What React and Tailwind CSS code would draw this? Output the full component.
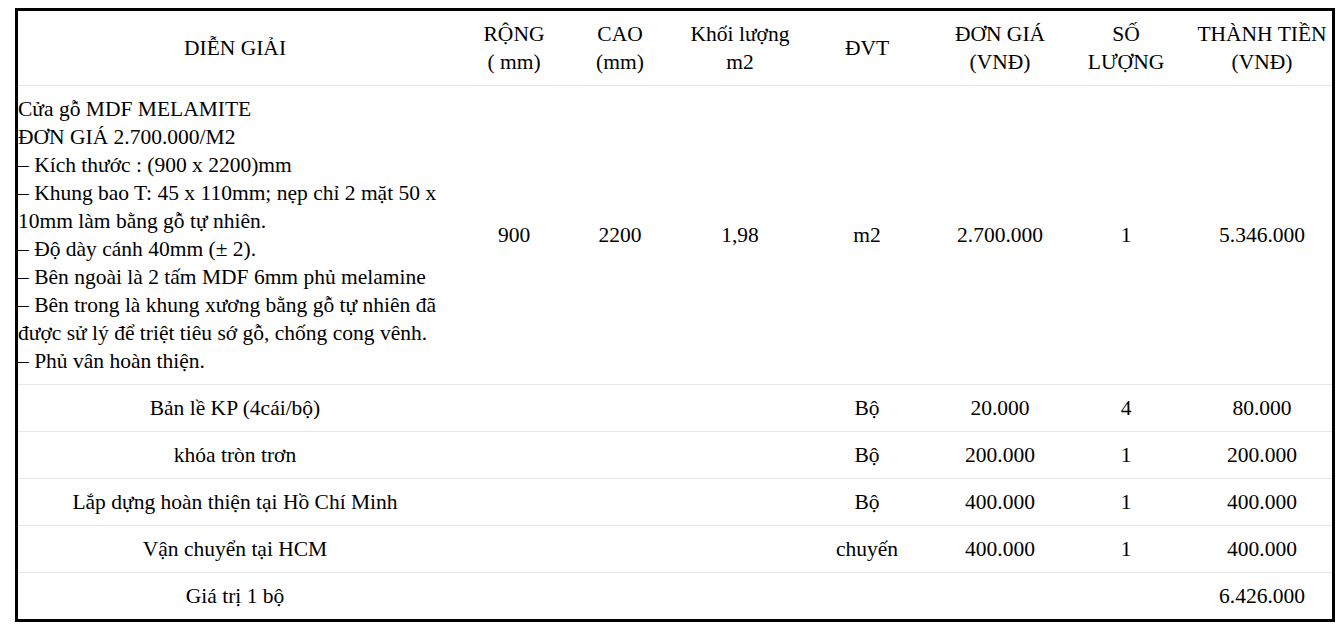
import React from "react";

const items = [
  { name: "Bản lề KP (4cái/bộ)", unit: "Bộ", price: "20.000", qty: "4", total: "80.000" },
  { name: "khóa tròn trơn", unit: "Bộ", price: "200.000", qty: "1", total: "200.000" },
  { name: "Lắp dựng hoàn thiện tại Hồ Chí Minh", unit: "Bộ", price: "400.000", qty: "1", total: "400.000" },
  { name: "Vận chuyển tại HCM", unit: "chuyến", price: "400.000", qty: "1", total: "400.000" },
];

const desc = [
  "Cửa gỗ MDF MELAMITE",
  "ĐƠN GIÁ 2.700.000/M2",
  "– Kích thước : (900 x 2200)mm",
  "– Khung bao T: 45 x 110mm; nẹp chỉ 2 mặt 50 x 10mm làm bằng gỗ tự nhiên.",
  "– Độ dày cánh 40mm (± 2).",
  "– Bên ngoài là 2 tấm MDF 6mm phủ melamine",
  "– Bên trong là khung xương bằng gỗ tự nhiên đã được sử lý để triệt tiêu sớ gỗ, chống cong vênh.",
  "– Phủ vân hoàn thiện.",
];

const td = "border-t border-[#e6e6e6] py-[9px] text-center align-middle";

export default function App() {
  return (
    <div className="min-h-screen bg-white pt-[8px] pl-[15px] font-['Liberation_Serif','Times_New_Roman',serif] text-[21.5px] leading-[28px] text-black">
      <div className="w-[1320px] border-[3px] border-black">
        <table className="w-full table-fixed border-collapse">
          <colgroup>
            <col className="w-[434px]" />
            <col className="w-[124px]" />
            <col className="w-[88px]" />
            <col className="w-[152px]" />
            <col className="w-[102px]" />
            <col className="w-[164px]" />
            <col className="w-[88px]" />
            <col className="w-[162px]" />
          </colgroup>
          <thead>
            <tr>
              <th className="py-[9px] text-center font-normal">DIỄN GIẢI</th>
              <th className="py-[9px] text-center font-normal">
                RỘNG
                <br />( mm)
              </th>
              <th className="py-[9px] text-center font-normal">
                CAO
                <br />
                (mm)
              </th>
              <th className="py-[9px] text-center font-normal">
                Khối lượng
                <br />
                m2
              </th>
              <th className="py-[9px] text-center font-normal">ĐVT</th>
              <th className="py-[9px] text-center font-normal">
                ĐƠN GIÁ
                <br />
                (VNĐ)
              </th>
              <th className="py-[9px] text-center font-normal">
                SỐ
                <br />
                LƯỢNG
              </th>
              <th className="py-[9px] pl-[22px] text-center font-normal">
                THÀNH TIỀN
                <br />
                (VNĐ)
              </th>
            </tr>
          </thead>
          <tbody>
            <tr>
              <td className="border-t border-[#e6e6e6] py-[9px] text-left align-middle">
                {desc.map((line, i) => (
                  <div key={i}>{line}</div>
                ))}
              </td>
              <td className={td}>900</td>
              <td className={td}>2200</td>
              <td className={td}>1,98</td>
              <td className={td}>m2</td>
              <td className={td}>2.700.000</td>
              <td className={td}>1</td>
              <td className={`${td} pl-[22px]`}>5.346.000</td>
            </tr>
            {items.map((it) => (
              <tr key={it.name}>
                <td className={td}>{it.name}</td>
                <td className={td}></td>
                <td className={td}></td>
                <td className={td}></td>
                <td className={td}>{it.unit}</td>
                <td className={td}>{it.price}</td>
                <td className={td}>{it.qty}</td>
                <td className={`${td} pl-[22px]`}>{it.total}</td>
              </tr>
            ))}
            <tr>
              <td className={td}>Giá trị 1 bộ</td>
              <td className={td}></td>
              <td className={td}></td>
              <td className={td}></td>
              <td className={td}></td>
              <td className={td}></td>
              <td className={td}></td>
              <td className={`${td} pl-[22px]`}>6.426.000</td>
            </tr>
          </tbody>
        </table>
      </div>
    </div>
  );
}
